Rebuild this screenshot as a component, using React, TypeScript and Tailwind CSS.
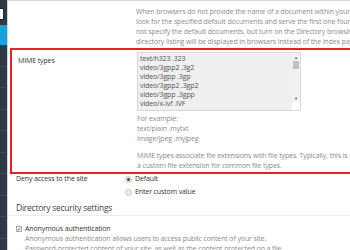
import React from "react";

const mimeTypes = [
  "text/h323 .323",
  "video/3gpp2 .3g2",
  "video/3gpp .3gp",
  "video/3gpp2 .3gp2",
  "video/3gpp .3gpp",
  "video/x-ivf .IVF",
];

function Radio({ checked }: { checked?: boolean }) {
  return (
    <span className="flex h-[7px] w-[7px] items-center justify-center rounded-full border border-[#c8c8c8] bg-[#ececec]">
      {checked && <span className="h-[3px] w-[3px] rounded-full bg-[#444]" />}
    </span>
  );
}

export default function App() {
  return (
    <div
      className="flex h-[250px] w-[350px] overflow-hidden bg-white text-[7px] leading-[10px] tracking-[-0.12px]"
      style={{ fontFamily: '"Open Sans", "Noto Sans", sans-serif' }}
    >
      {/* Left nav strip */}
      <aside className="flex w-[7px] shrink-0 flex-col bg-[#2e3b47]">
        <div className="h-[25px] pt-[8px]">
          <div className="h-[12px] w-[4px] border border-l-0 border-[#1f2a33] bg-white" />
        </div>
        <div className="h-[20px] bg-[#1aa1dc]" />
        {Array.from({ length: 9 }).map((_, i) => (
          <div key={i} className="h-[21.5px] border-b border-[#3d4b57]" />
        ))}
      </aside>

      <main className="min-w-0 flex-1 border-l border-t border-[#d5d5d5]">
        {/* Default document description */}
        <div className="overflow-hidden whitespace-nowrap pl-[128px] pt-[6px] text-[#8c8c8c]">
          <p>When browsers do not provide the name of a document within your site,</p>
          <p>look for the specified default documents and serve the first one found</p>
          <p>not specify the default documents, but turn on the Directory browsing</p>
          <p>directory listing will be displayed in browsers instead of the index page</p>
        </div>

        {/* MIME types (highlighted) */}
        <div className="ml-[2px] mt-[1px] flex overflow-hidden border-2 border-r-0 border-[#e8202a] pb-[1px] pl-[6px] pt-[2px]">
          <div className="w-[119px] shrink-0 pt-[4px] text-[#333]">MIME types</div>
          <div className="whitespace-nowrap">
            <div className="flex h-[59px] w-[164px] border border-[#d9d9d9] bg-[#efefef]">
              <div className="flex-1 pl-[2px] pt-[1px] leading-[9px] text-[#555]">
                {mimeTypes.map((m) => (
                  <p key={m}>{m}</p>
                ))}
              </div>
              <div className="flex w-[8px] flex-col items-center bg-[#f1f1f1]">
                <span className="mt-[2px] text-[4px] leading-[5px] text-[#555]">▲</span>
                <div className="mt-[1px] h-[8px] w-[6px] bg-[#c1c1c1]" />
                <div className="flex-1" />
                <span className="text-[4px] leading-[5px] text-[#555]">▼</span>
                <div className="mt-[1px] h-[8px] w-[8px] bg-white" />
              </div>
            </div>
            <div className="pt-[3px] text-[#8c8c8c]">
              <p>For example:</p>
              <p>text/plain .mytxt</p>
              <p>image/jpeg .myjpeg</p>
              <p className="mt-[7px]">
                MIME types associate file extensions with file types. Typically, this is used to
              </p>
              <p>a custom file extension for common file types.</p>
            </div>
          </div>
        </div>

        {/* Deny access */}
        <div className="flex pl-[8px] text-[#333]">
          <div className="w-[119px] shrink-0">Deny access to the site</div>
          <div className="-ml-[10px] flex flex-col gap-[3px]">
            <label className="flex items-center gap-[3px]">
              <Radio checked />
              <span>Default</span>
            </label>
            <label className="flex items-center gap-[3px]">
              <Radio />
              <span>Enter custom value</span>
            </label>
          </div>
        </div>

        {/* Directory security settings */}
        <div className="mt-[5px] border-b border-[#ececec] pb-[1px] pl-[8px]">
          <h2 className="text-[8.5px] leading-[12px] tracking-[-0.25px] text-[#444]">
            Directory security settings
          </h2>
        </div>

        <div className="mt-[8px] pl-[8px]">
          <label className="flex items-center gap-[3px] text-[#333]">
            <span className="flex h-[6px] w-[6px] items-center justify-center border border-[#aaa] bg-[#f4f4f4] text-[5px] leading-[5px]">
              ✓
            </span>
            <span>Anonymous authentication</span>
          </label>
          <div className="overflow-hidden whitespace-nowrap pl-[9px] text-[#8c8c8c]">
            <p>Anonymous authentication allows users to access public content of your site.</p>
            <p>Password-protected content of your site, as well as the content protected on a file</p>
          </div>
        </div>
      </main>
    </div>
  );
}
